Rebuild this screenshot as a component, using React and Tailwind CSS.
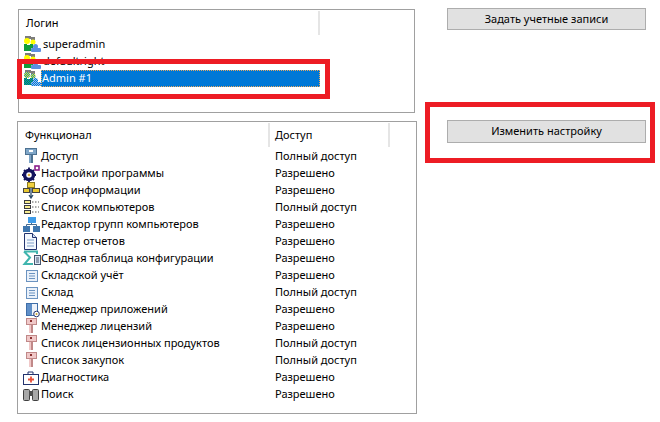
import React from "react";

const font = "font-['Noto_Sans','Open_Sans',sans-serif]";

function Users({ selected }) {
  const yellow = selected ? "url(#dither-yellow)" : "#ffff00";
  const green = selected ? "url(#dither-green)" : "#0f9d3a";
  const blue = selected ? "url(#dither-blue)" : "#5b8fe0";
  return (
    <svg width="19" height="17" viewBox="0 0 19 17" className="shrink-0">
      <defs>
        <pattern id="dither-yellow" width="2" height="2" patternUnits="userSpaceOnUse">
          <rect width="2" height="2" fill="#0078d7" />
          <rect width="1" height="1" fill="#ffff00" />
          <rect x="1" y="1" width="1" height="1" fill="#ffff00" />
        </pattern>
        <pattern id="dither-green" width="2" height="2" patternUnits="userSpaceOnUse">
          <rect width="2" height="2" fill="#0078d7" />
          <rect width="1" height="1" fill="#0f9d3a" />
          <rect x="1" y="1" width="1" height="1" fill="#0f9d3a" />
        </pattern>
        <pattern id="dither-blue" width="2" height="2" patternUnits="userSpaceOnUse">
          <rect width="2" height="2" fill="#0078d7" />
          <rect width="1" height="1" fill="#9cc0f0" />
          <rect x="1" y="1" width="1" height="1" fill="#9cc0f0" />
        </pattern>
      </defs>
      <rect x="3" y="0" width="6" height="3" fill="#7c7c7c" />
      <rect x="9" y="1" width="4" height="3" fill="#7c7c7c" />
      <circle cx="5" cy="5" r="3" fill={yellow} />
      <circle cx="11" cy="6" r="2.500" fill={yellow} />
      <path d="M2 8h3v1h3V8h3v4H9v3H2z" fill={green} />
      <circle cx="13.500" cy="10.500" r="2.500" fill={blue} />
      <rect x="9" y="12" width="10" height="4" rx="1" fill={blue} />
    </svg>
  );
}

function KeyIcon({ red }) {
  const main = red ? "#f0c8c8" : "#7fa6c8";
  const dark = red ? "#c08888" : "#4d7191";
  return (
    <svg width="20" height="17" viewBox="0 0 20 17" className="shrink-0">
      {red ? (
        <>
          <rect x="5.500" y="0.500" width="10" height="6" fill={main} stroke={dark} />
          <rect x="9" y="2" width="2" height="2" fill="#8a3030" />
          <rect x="8" y="7" width="4" height="8" fill={main} />
          <rect x="10" y="7" width="2" height="8" fill={dark} />
        </>
      ) : (
        <>
          <rect x="4.500" y="0.500" width="11" height="6" fill={main} stroke={dark} />
          <rect x="8" y="2" width="4" height="2" fill="#fff" />
          <rect x="8" y="7" width="4" height="8" fill={main} />
          <rect x="10" y="7" width="2" height="8" fill={dark} />
        </>
      )}
    </svg>
  );
}

function GearIcon() {
  return (
    <svg width="20" height="17" viewBox="0 0 20 17" className="shrink-0">
      <circle cx="8" cy="10" r="4.500" fill="none" stroke="#14145e" strokeWidth="3.500" />
      <circle cx="8" cy="10" r="1.300" fill="#e0b040" />
      <path d="M8 2.500v3M8 14.500v2.500M1 10h2.500M12.500 10H15M3 5l2 2M13 5l-2 2M3 15l2-2M13 15l-2-2" stroke="#14145e" strokeWidth="1.800" />
      <rect x="14" y="1" width="4" height="4" fill="#fff" stroke="#8a1f8a" strokeWidth="1.600" />
    </svg>
  );
}

function CollectIcon() {
  return (
    <svg width="20" height="17" viewBox="0 0 20 17" className="shrink-0">
      <rect x="6.500" y="0.500" width="7" height="5" fill="#f0d040" stroke="#8a7a20" />
      <rect x="2.500" y="6.500" width="6" height="4" fill="#e8c830" stroke="#444" />
      <rect x="11.500" y="6.500" width="7" height="4" fill="#e8c830" stroke="#444" />
      <path d="M10 6v9M8 13l2 3 2-3" stroke="#2a4a6a" strokeWidth="1.300" fill="none" />
    </svg>
  );
}

function ListIcon() {
  return (
    <svg width="20" height="17" viewBox="0 0 20 17" className="shrink-0">
      {[1, 6, 11].map((y) => (
        <g key={y}>
          <rect x="3.500" y={y + 0.500} width="6" height="3" fill="#f5eb90" stroke="#3a3a40" />
          <path d={`M11 ${y + 2}h7`} stroke="#555" strokeDasharray="1.500 1.500" />
        </g>
      ))}
    </svg>
  );
}

function GroupsIcon() {
  return (
    <svg width="20" height="17" viewBox="0 0 20 17" className="shrink-0">
      <rect x="7" y="1" width="8" height="6" fill="#3f9be8" />
      <rect x="2" y="10" width="7" height="6" fill="#3f76ad" />
      <rect x="12" y="10" width="7" height="6" fill="#3f76ad" />
      <path d="M10.500 7v2M5.500 10V8.500h10V10" stroke="#4a6a8a" fill="none" />
    </svg>
  );
}

function ReportIcon() {
  return (
    <svg width="20" height="17" viewBox="0 0 20 17" className="shrink-0">
      <path d="M3.500.500h8l4 4v12h-12z" fill="#f4f8fd" stroke="#22336e" />
      <path d="M11.500.500v4h4" fill="#cfe0f5" stroke="#22336e" />
      <path d="M6 7h7M6 10h7M6 13h7" stroke="#7f9fc8" />
    </svg>
  );
}

function SigmaIcon() {
  return (
    <svg width="20" height="17" viewBox="0 0 20 17" className="shrink-0">
      <path d="M3 1.500h13v2.500M12 14H3.500l5.500-6.500L3 1.500" fill="none" stroke="#3fb5ae" strokeWidth="2" />
      <rect x="13.500" y="5.500" width="6" height="9" fill="#dbe7f5" stroke="#44556e" />
      <path d="M15 8h3M15 10h3M15 12h3" stroke="#44556e" />
    </svg>
  );
}

function SheetIcon() {
  return (
    <svg width="20" height="17" viewBox="0 0 20 17" className="shrink-0">
      <rect x="5.500" y="3.500" width="11" height="11" fill="#eaf1fa" stroke="#6b93c0" />
      <path d="M8 6.500h6M8 9h6M8 11.500h6" stroke="#6b93c0" />
    </svg>
  );
}

function AppsIcon() {
  return (
    <svg width="20" height="17" viewBox="0 0 20 17" className="shrink-0">
      <rect x="5.500" y="2.500" width="11" height="12" fill="#eef3fa" stroke="#3f6ea8" />
      <path d="M6 3h5v11H6z" fill="#5f8fc8" />
      <circle cx="15.500" cy="13" r="2.800" fill="#fff" stroke="#22336e" />
      <circle cx="15.500" cy="13" r="1" fill="#c8a030" />
    </svg>
  );
}

function KitIcon() {
  return (
    <svg width="20" height="17" viewBox="0 0 20 17" className="shrink-0">
      <path d="M7 5V3h5v2" fill="none" stroke="#22336e" />
      <rect x="2.500" y="5.500" width="15" height="10" fill="#fff" stroke="#22336e" />
      <path d="M10 7.500v6M7 10.500h6" stroke="#e8503a" strokeWidth="1.800" />
    </svg>
  );
}

function BinocularsIcon() {
  return (
    <svg width="20" height="17" viewBox="0 0 20 17" className="shrink-0">
      <rect x="2.500" y="3.500" width="6" height="11" rx="1" fill="#a8a8a8" stroke="#404040" />
      <rect x="11.500" y="3.500" width="6" height="11" rx="1" fill="#a8a8a8" stroke="#404040" />
      <rect x="8" y="5" width="4" height="5" fill="#505050" />
    </svg>
  );
}

const logins = [
  { name: "superadmin" },
  { name: "defaultright" },
  { name: "Admin #1", selected: true },
];

const features = [
  { Icon: KeyIcon, name: "Доступ", access: "Полный доступ" },
  { Icon: GearIcon, name: "Настройки программы", access: "Разрешено" },
  { Icon: CollectIcon, name: "Сбор информации", access: "Разрешено" },
  { Icon: ListIcon, name: "Список компьютеров", access: "Полный доступ" },
  { Icon: GroupsIcon, name: "Редактор групп компьютеров", access: "Разрешено" },
  { Icon: ReportIcon, name: "Мастер отчетов", access: "Разрешено" },
  { Icon: SigmaIcon, name: "Сводная таблица конфигурации", access: "Разрешено" },
  { Icon: SheetIcon, name: "Складской учёт", access: "Разрешено" },
  { Icon: SheetIcon, name: "Склад", access: "Полный доступ" },
  { Icon: AppsIcon, name: "Менеджер приложений", access: "Разрешено" },
  { Icon: KeyIcon, red: true, name: "Менеджер лицензий", access: "Разрешено" },
  { Icon: KeyIcon, red: true, name: "Список лицензионных продуктов", access: "Полный доступ" },
  { Icon: KeyIcon, red: true, name: "Список закупок", access: "Полный доступ" },
  { Icon: KitIcon, name: "Диагностика", access: "Разрешено" },
  { Icon: BinocularsIcon, name: "Поиск", access: "Разрешено" },
];

function App() {
  return (
    <div className={`${font} relative flex w-[660px] h-[422px] bg-white text-[11px] text-black overflow-hidden`}>
      <div className="flex flex-col w-[417px] pl-[17px] pt-[9px] gap-[8px]">
        <div className="ml-px w-[397px] h-[104px] border border-[#a0a0a0] pt-px">
          <div className="flex h-[24px]">
            <div className="w-[301px] h-[24px] pl-[7px] flex items-center border-r-2 border-[#e5e5e5]">Логин</div>
          </div>
          <div className="pt-[1px]">
            {logins.map((l) => (
              <div key={l.name} className="flex items-center h-[17px] pl-[3px]">
                <Users selected={l.selected} />
                {l.selected ? (
                  <div className="w-[279px] h-[17px] flex items-center pl-px bg-[#0078d7] text-white outline-1 -outline-offset-1 outline-dotted outline-[#e8a860]">
                    {l.name}
                  </div>
                ) : (
                  <div className="ml-[2px]">{l.name}</div>
                )}
              </div>
            ))}
          </div>
        </div>
        <div className="w-[400px] h-[293px] border border-[#a0a0a0] pt-px">
          <div className="flex h-[24px]">
            <div className="w-[252px] pl-[7px] flex items-center border-r-2 border-[#e5e5e5]">Функционал</div>
            <div className="w-[120px] pl-[5px] flex items-center border-r-2 border-[#e5e5e5]">Доступ</div>
          </div>
          <div className="pt-[1px]">
            {features.map((f) => (
              <div key={f.name} className="flex items-center h-[17px]">
                <div className="w-[251px] flex items-center pl-[3px] whitespace-nowrap">
                  <f.Icon red={f.red} />
                  <span>{f.name}</span>
                </div>
                <div className="pl-[6px]">{f.access}</div>
              </div>
            ))}
          </div>
        </div>
      </div>
      <div className="flex flex-col ml-[30px] pt-[8px] gap-[90px] w-[199px]">
        <button className="h-[22px] w-[199px] flex items-center justify-center bg-[#e1e1e1] border border-[#adadad]">
          Задать учетные записи
        </button>
        <button className="h-[23px] w-[199px] flex items-center justify-center bg-[#e1e1e1] border border-[#adadad]">
          Изменить настройку
        </button>
      </div>
      <div className="absolute left-[17px] top-[59px] w-[313px] h-[40px] border-[5px] border-[#ed1c24]" />
      <div className="absolute left-[425px] top-[102px] w-[230px] h-[61px] border-[5px] border-[#ed1c24]" />
    </div>
  );
}

export default App;
